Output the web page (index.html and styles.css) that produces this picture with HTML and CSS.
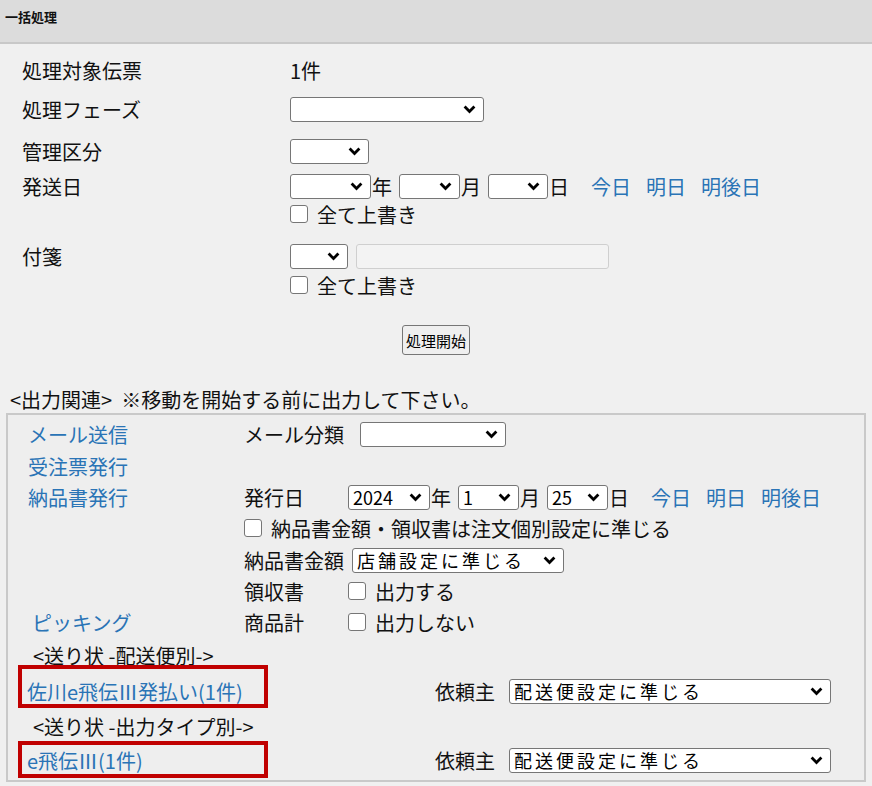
FILE: index.html
```html
<!DOCTYPE html>
<html lang="ja">
  <head>
    <meta charset="UTF-8" />
    <meta name="viewport" content="width=device-width, initial-scale=1.0" />
    <title>一括処理</title>
    <link rel="stylesheet" href="styles.css">
  </head>
  <body>
    <div class="titlebar">一括処理</div>

    <div class="form">
      <div class="row">
        <div class="label">処理対象伝票</div>
        <div class="field"><div class="line">1件</div></div>
      </div>
      <div class="row r2">
        <div class="label">処理フェーズ</div>
        <div class="field"><div class="line"><select class="w-phase"><option></option></select></div></div>
      </div>
      <div class="row r3">
        <div class="label">管理区分</div>
        <div class="field"><div class="line"><select class="w-kubun"><option></option></select></div></div>
      </div>
      <div class="row r4">
        <div class="label">発送日</div>
        <div class="field">
          <div class="line">
            <select class="w-year"><option></option></select><span class="unit">年</span>
            <select class="w-month"><option></option></select><span class="unit">月</span>
            <select class="w-day"><option></option></select><span class="unit">日</span>
            <a class="quick first" href="#">今日</a>
            <a class="quick" href="#">明日</a>
            <a class="quick" href="#">明後日</a>
          </div>
          <label class="check-line"><input type="checkbox" />全て上書き</label>
        </div>
      </div>
      <div class="row r5">
        <div class="label">付箋</div>
        <div class="field">
          <div class="line">
            <select class="w-tag"><option></option></select>
            <input class="tag-text" type="text" disabled />
          </div>
          <label class="check-line cl2"><input type="checkbox" />全て上書き</label>
        </div>
      </div>

      <div class="actions"><button>処理開始</button></div>
    </div>

    <div class="out-title">&lt;出力関連&gt;&nbsp; ※移動を開始する前に出力して下さい。</div>

    <div class="out-box">
      <div class="orow h32">
        <div class="olabel"><a href="#">メール送信</a></div>
        <div class="ofield">
          <span class="sub w-mail">メール分類</span>
          <select class="w-mailtype"><option></option></select>
        </div>
      </div>
      <div class="orow h32">
        <div class="olabel"><a href="#">受注票発行</a></div>
      </div>
      <div class="orow h30">
        <div class="olabel"><a href="#">納品書発行</a></div>
        <div class="ofield">
          <span class="sub w-issue">発行日</span>
          <select class="s-year"><option>2024</option></select><span class="unit">年</span>
          <select class="s-num"><option>1</option></select><span class="unit">月</span>
          <select class="s-num"><option>25</option></select><span class="unit">日</span>
          <a class="quick first2" href="#">今日</a>
          <a class="quick" href="#">明日</a>
          <a class="quick" href="#">明後日</a>
        </div>
      </div>
      <div class="orow h32">
        <div class="olabel"></div>
        <label class="ofield"><input type="checkbox" class="cb-wide" />納品書金額・領収書は注文個別設定に準じる</label>
      </div>
      <div class="orow h32">
        <div class="olabel"></div>
        <div class="ofield">
          <span class="sub w-amount">納品書金額</span>
          <select class="w-store jp"><option>店舗設定に準じる</option></select>
        </div>
      </div>
      <div class="orow h30">
        <div class="olabel"></div>
        <label class="ofield"><span class="sub w-issue">領収書</span><input type="checkbox" />出力する</label>
      </div>
      <div class="orow h32">
        <div class="olabel"><a class="indent" href="#">ピッキング</a></div>
        <label class="ofield"><span class="sub w-issue">商品計</span><input type="checkbox" />出力しない</label>
      </div>
      <div class="orow h35">
        <div class="group">&lt;送り状 -配送便別-&gt;</div>
      </div>
      <div class="orow h36">
        <div class="send mark-a"><a href="#">佐川e飛伝Ⅲ発払い(1件)</a></div>
        <span class="sub w-client">依頼主</span>
        <select class="w-sender jp"><option>配送便設定に準じる</option></select>
      </div>
      <div class="orow h35">
        <div class="group">&lt;送り状 -出力タイプ別-&gt;</div>
      </div>
      <div class="orow h33">
        <div class="send mark-b"><a href="#">e飛伝Ⅲ(1件)</a></div>
        <span class="sub w-client">依頼主</span>
        <select class="w-sender jp"><option>配送便設定に準じる</option></select>
      </div>
    </div>
  </body>
</html>
```

FILE: styles.css
```css
* {
  box-sizing: border-box;
}

body {
  margin: 0;
  background-color: #f0f0f0;
  color: #111111;
  font-family: "Noto Sans CJK JP", "Noto Sans", sans-serif;
  font-size: 20px;
}

a {
  color: #2a74b6;
  text-decoration: none;
}

select {
  -webkit-appearance: none;
  appearance: none;
  flex: none;
  height: 25px;
  padding: 0 0 0 4px;
  font-family: "Noto Sans CJK JP", sans-serif;
  font-size: 18px;
  line-height: 21px;
  color: #000000;
  background: #ffffff url("data:image/svg+xml,%3Csvg xmlns='http://www.w3.org/2000/svg' width='13' height='9' viewBox='0 0 13 9'%3E%3Cpath d='M1.6 1.6 6.5 6.5 11.4 1.6' fill='none' stroke='%23000' stroke-width='2.8'/%3E%3C/svg%3E") no-repeat right 7px center;
  border: 1px solid #767676;
  border-radius: 3px;
}

select.jp {
  letter-spacing: 3px;
}

input[type="checkbox"] {
  -webkit-appearance: none;
  appearance: none;
  flex: none;
  width: 18px;
  height: 18px;
  margin: 0 9px 0 0;
  background-color: #ffffff;
  border: 1px solid #767676;
  border-radius: 3px;
}

.titlebar {
  height: 44px;
  padding: 8px 5px;
  background-color: #dcdcdc;
  border-bottom: 2px solid #c8c8c8;
  font-size: 13px;
  font-weight: bold;
  line-height: 18px;
}

/* upper form */
.form {
  padding: 14px 0 0 22px;
}

.row {
  display: flex;
  align-items: flex-start;
}

.r2 { margin-top: 14px; }
.r3 { margin-top: 17px; }
.r4 { margin-top: 10px; }
.r5 { margin-top: 18px; }

.label {
  width: 268px;
  flex: none;
  line-height: 25px;
}

.line {
  display: flex;
  align-items: center;
  height: 25px;
}

.check-line {
  display: flex;
  align-items: center;
  height: 24px;
  margin-top: 3px;
}

.check-line.cl2 {
  margin-top: 4px;
}

.unit {
  margin: 0 7px 0 1px;
}

.quick {
  margin-right: 15px;
}

.quick.first {
  margin-left: 15px;
}

.w-phase { width: 194px; }
.w-kubun { width: 79px; }
.w-year { width: 81px; }
.w-month { width: 61px; }
.w-day { width: 60px; }
.w-tag { width: 58px; }

.tag-text {
  width: 253px;
  height: 25px;
  margin-left: 8px;
  background-color: #f3f3f3;
  border: 1px solid #cfcfcf;
  border-radius: 3px;
}

.actions {
  display: flex;
  justify-content: center;
  margin: 28px 0 0 -22px;
}

.actions button {
  width: 68px;
  height: 30px;
  padding: 0;
  font-family: "Noto Sans CJK JP", sans-serif;
  font-size: 15px;
  color: #000000;
  background-color: #efefef;
  border: 1px solid #767676;
  border-radius: 3px;
}

/* output section */
.out-title {
  margin-top: 32px;
  padding-left: 10px;
  line-height: 26px;
}

.out-box {
  margin: 0 6px;
  padding: 3px 0;
  background-color: #eeeeee;
  border: 2px solid #c9c9c9;
}

.orow {
  display: flex;
  align-items: center;
}

.h30 { height: 30px; }
.h32 { height: 32px; }
.h33 { height: 33px; }
.h35 { height: 35px; }
.h36 { height: 36px; }

.olabel {
  width: 236px;
  flex: none;
  padding-left: 20px;
}

.olabel .indent {
  margin-left: 4px;
}

.ofield {
  display: flex;
  align-items: center;
}

.sub {
  flex: none;
}

.w-mail { width: 116px; }
.w-issue { width: 104px; }
.w-amount { width: 108px; }

.w-mailtype { width: 146px; }
.s-year { width: 82px; }
.s-num { width: 61px; }
.w-store { width: 212px; }

.quick.first2 {
  margin-left: 15px;
}

.cb-wide {
  margin-right: 11px;
}

.group {
  padding-left: 25px;
}

.send {
  position: relative;
  align-self: stretch;
  display: flex;
  align-items: center;
  width: 427px;
  flex: none;
  padding-left: 19px;
}

/* red highlight frames drawn over the waybill links */
.send::after {
  content: "";
  box-sizing: border-box;
  position: absolute;
  left: 10px;
  width: 250px;
  border: 4px solid #c00000;
}

.mark-a::after {
  top: -8px;
  bottom: 1px;
}

.mark-b::after {
  top: -3px;
  bottom: -1px;
}

.w-client { width: 74px; }
.w-sender { width: 322px; }
```
